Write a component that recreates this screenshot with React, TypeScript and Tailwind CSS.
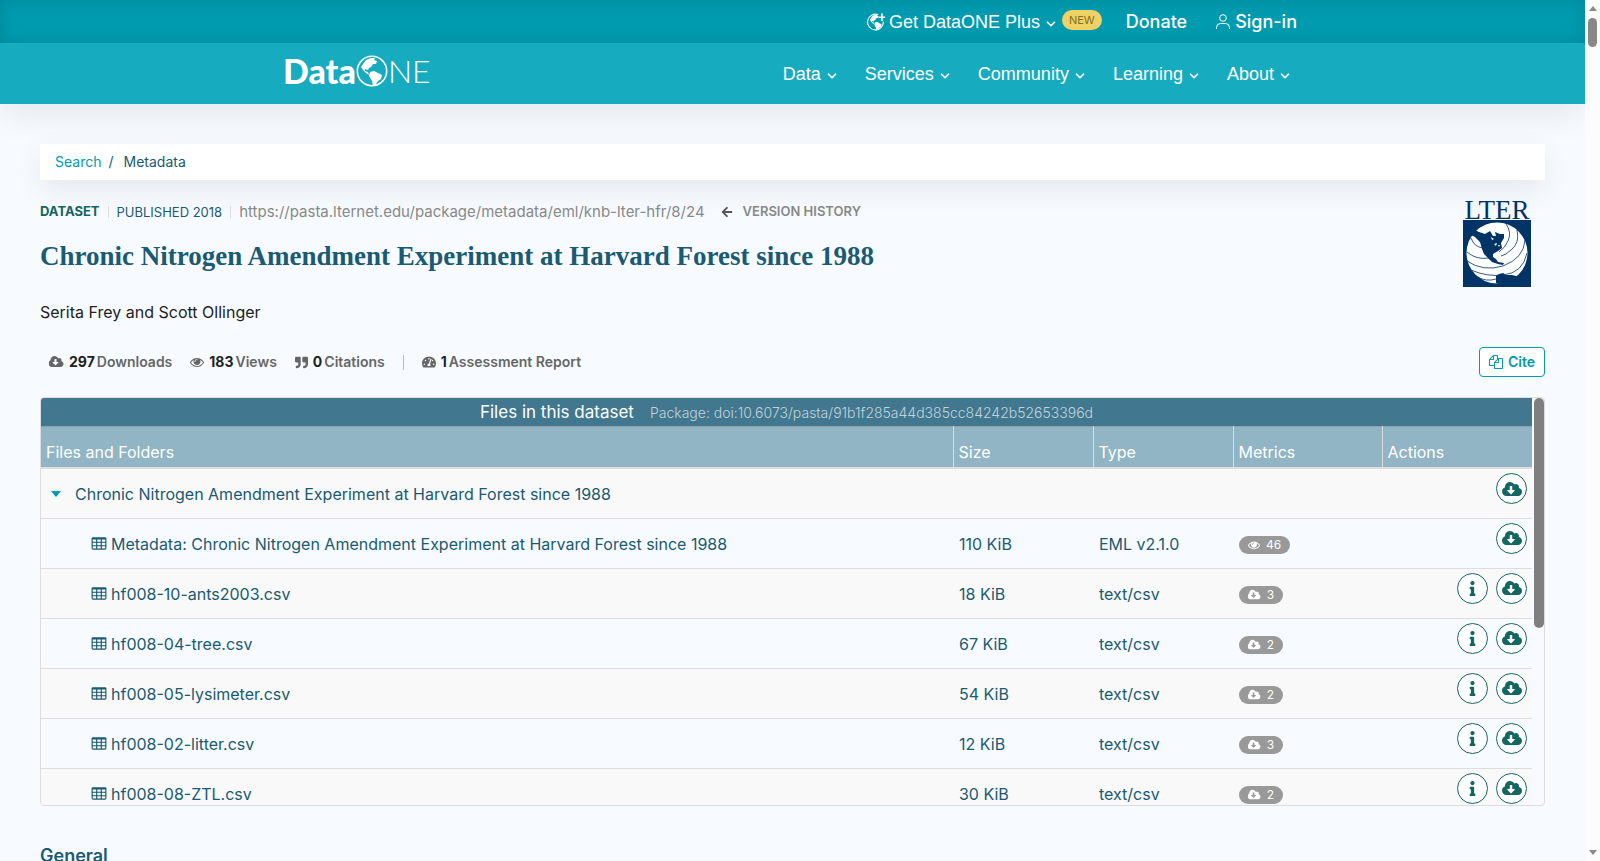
import type { ReactNode } from "react";
import { ChevronDown } from "lucide-react";
import { FaArrowLeft, FaCloudDownloadAlt, FaInfo, FaQuoteRight, FaTachometerAlt } from "react-icons/fa";

const menus = ["Data", "Services", "Community", "Learning", "About"];

const files = [
  { name: "Metadata: Chronic Nitrogen Amendment Experiment at Harvard Forest since 1988", size: "110 KiB", type: "EML v2.1.0", count: 46, metadata: true },
  { name: "hf008-10-ants2003.csv", size: "18 KiB", type: "text/csv", count: 3 },
  { name: "hf008-04-tree.csv", size: "67 KiB", type: "text/csv", count: 2 },
  { name: "hf008-05-lysimeter.csv", size: "54 KiB", type: "text/csv", count: 2 },
  { name: "hf008-02-litter.csv", size: "12 KiB", type: "text/csv", count: 3 },
  { name: "hf008-08-ZTL.csv", size: "30 KiB", type: "text/csv", count: 2 }
];

const cellPath =
  "v-192q0-14-9-23t-23-9h-320q-14 0-23 9t-9 23v192q0 14 9 23t23 9h320q14 0 23-9t9-23z";

function TableIcon() {
  const cells = [576, 1088, 1600].flatMap((x) => [608, 992, 1376].map((y) => `M${x} ${y}${cellPath}`));
  return (
    <svg viewBox="0 0 1792 1792" className="size-4 shrink-0" fill="currentColor" fillRule="evenodd" aria-hidden="true">
      <path
        d={`${cells.join("")}M1728 288v1088q0 66-47 113t-113 47h-1344q-66 0-113-47t-47-113v-1088q0-66 47-113t113-47h1344q66 0 113 47t47 113z`}
      />
    </svg>
  );
}

function EyeIcon({ className }: { className: string }) {
  return (
    <svg viewBox="0 0 1792 1792" className={className} fill="currentColor" aria-hidden="true">
      <path d="M1664 960q-152-236-381-353 61 104 61 225 0 185-131.5 316.5t-316.5 131.5-316.5-131.5-131.5-316.5q0-121 61-225-229 117-381 353 133 205 333.5 326.5t434.5 121.5 434.5-121.5 333.5-326.5zm-720-384q0-20-14-34t-34-14q-125 0-214.5 89.5t-89.5 214.5q0 20 14 34t34 14 34-14 14-34q0-86 61-147t147-61q20 0 34-14t14-34zm848 384q0 34-20 69-140 230-376.5 368.5t-499.5 138.5-499.5-139-376.5-368q-20-35-20-69t20-69q140-229 376.5-368t499.5-139 499.5 139 376.5 368q20 35 20 69z" />
    </svg>
  );
}

function CloudIcon({ className }: { className: string }) {
  return (
    <svg viewBox="0 0 1920 1792" className={className} fill="currentColor" aria-hidden="true">
      <path d="M1216 928q0-14-9-23t-23-9h-224v-352q0-13-9.5-22.5t-22.5-9.5h-192q-13 0-22.5 9.5t-9.5 22.5v352h-224q-13 0-22.5 9.5t-9.5 22.5q0 14 9 23l352 352q9 9 23 9t23-9l351-351q10-12 10-24zm640 224q0 159-112.5 271.5t-271.5 112.5h-1088q-185 0-316.5-131.5t-131.5-316.5q0-130 70-240t188-165q-2-30-2-43 0-212 150-362t362-150q156 0 285.5 87t188.5 231q71-62 166-62 106 0 181 75t75 181q0 76-41 138 130 31 213.5 135.5t83.5 238.5z" />
    </svg>
  );
}

function FilesIcon() {
  return (
    <svg viewBox="0 0 1792 1792" className="size-[14px]" fill="currentColor" aria-hidden="true">
      <path d="M1696 384q40 0 68 28t28 68v1216q0 40-28 68t-68 28h-960q-40 0-68-28t-28-68v-288h-544q-40 0-68-28t-28-68v-672q0-40 20-88t48-76l408-408q28-28 76-48t88-20h416q40 0 68 28t28 68v328q68-40 128-40h416zm-544 213l-299 299h299v-299zm-640-384l-299 299h299v-299zm196 647l316-316v-416h-384v416q0 40-28 68t-68 28h-416v640h512v-256q0-40 20-88t48-76zm956 804v-1152h-384v416q0 40-28 68t-68 28h-416v640h896z" />
    </svg>
  );
}

function Continents() {
  return (
    <>
      <path d="M7 9l3-4 5-2 4 0-1 2 3 1-1 3-3 0-2 3-2 1-1 2-3-1 0 2 3 1 1 3-3-2-3-3-2-3z" />
      <path d="M14 17l4-1 4 2 4 2-1 4-3 2-2 3-3 2-1-5-3-5z" />
    </>
  );
}

function Logo() {
  return (
    <a href="#home" aria-label="DataONE home" className="flex items-center pb-[6px] text-white">
      <span className="font-[Lato] text-[34px] leading-9 font-black">Data</span>
      <svg viewBox="0 0 32 32" className="size-8" fill="currentColor" aria-hidden="true">
        <circle cx="16" cy="16" r="14.7" fill="none" stroke="currentColor" strokeWidth="1.5" />
        <Continents />
      </svg>
      <span className="font-[Lato] text-[32px] leading-9 font-light">NE</span>
    </a>
  );
}

function LterLogo() {
  return (
    <div className="mr-[14px] flex w-[68px] flex-col items-center">
      <span className="font-['Liberation_Serif',serif] text-[27px] leading-5 text-[#003366]">LTER</span>
      <svg viewBox="0 0 68 67" className="w-full" aria-hidden="true">
        <rect width="68" height="67" fill="#003366" />
        <circle cx="34" cy="33" r="30.5" fill="#fff" />
        <g fill="none" stroke="#003366" strokeWidth="0.8">
          <path d="M43 4q6 8 2 17q-3 7-9 11" />
          <path d="M54 10q3 13-6 20q-5 5-10 6" />
          <path d="M62 20q-1 18-22 26q-20 6-36-5" />
          <path d="M64 33q-4 20-24 22q-16 2-32-5" />
          <path d="M8 18q3 9 12 10M4 32q9 8 22 6M15 57q8 5 18 2" />
        </g>
        <g fill="#003366">
          <path d="M10 9l6 3 6 2 5-3 3 5 3 0-1-4 5 2 4 0 0 4-3 5 1 5-4 3-5 3 0 3 3 2 2 3 6 1-1 2-5-1-6-2-4-4-4-4-2-5-2-7-5-5-4-2-3-4z" />
          <path d="M33 56l3-2 4-1 3 2 6 0 4 1 3 2-4 4-8 2-6 1-5-2z" />
        </g>
        <path d="M31 24l3-1-1 3zM35 25l2 0-1 2zM28 17l3 2-2 1z" fill="#fff" />
      </svg>
    </div>
  );
}

function Stat({ icon, count, label }: { icon: ReactNode; count: number; label: string }) {
  return (
    <button type="button" className="flex items-center gap-[2px] text-sm font-semibold text-[#666]">
      {icon}
      <span className="ml-[3px] font-bold text-[#222]">{count}</span>
      <span>{label}</span>
    </button>
  );
}

function ActionButton({ label, children }: { label: string; children: ReactNode }) {
  return (
    <button
      type="button"
      aria-label={label}
      className="flex size-[31px] items-center justify-center rounded-full border border-[#146660] bg-white text-[#146660]"
    >
      {children}
    </button>
  );
}

function Header() {
  return (
    <header className="shrink-0 text-white shadow-[0_10px_30px_rgba(0,0,0,0.08)]">
      <div className="bg-[#009baf] shadow-[inset_0_0_16px_rgba(0,70,90,0.25)]">
        <div className="mx-auto flex h-[43px] max-w-[1019px] items-center justify-end text-lg">
          <button type="button" className="flex items-center gap-1 font-['Liberation_Sans',sans-serif]">
            <svg viewBox="0 0 32 32" className="size-[18px]" fill="currentColor" aria-hidden="true">
              <path d="M20 3A14 14 0 1 0 29 15" fill="none" stroke="currentColor" strokeWidth="2" />
              <Continents />
              <path d="M25 1h3v5h4v3h-4v5h-3V9h-4V6h4z" />
            </svg>
            Get DataONE Plus
            <ChevronDown size={14} strokeWidth={3} className="mt-1" />
          </button>
          <span className="mr-6 mb-1 ml-1 rounded-full bg-[#efd166] px-[7px] text-[11px] leading-5 text-[#857018]">NEW</span>
          <a href="#donate" className="mr-7 font-medium">Donate</a>
          <a href="#signin" className="mr-[5px] flex items-center gap-1 font-medium">
            <svg viewBox="0 0 16 16" className="size-4" fill="none" stroke="currentColor" aria-hidden="true">
              <circle cx="8" cy="4" r="3.3" />
              <path d="M1.5 15v-1.5q0-4 4-4h5q4 0 4 4V15" />
            </svg>
            Sign-in
          </a>
        </div>
      </div>
      <nav className="bg-[#17abc0]">
        <div className="mx-auto flex h-[61px] max-w-[1019px] items-center justify-between">
          <Logo />
          <div className="mr-[10px] flex gap-[26px] font-['Liberation_Sans',sans-serif] text-lg">
            {menus.map((menu) => (
              <button type="button" key={menu} className="flex items-center gap-1">
                {menu}
                <ChevronDown size={14} strokeWidth={3} className="mt-1" />
              </button>
            ))}
          </div>
        </div>
      </nav>
    </header>
  );
}

function FilesTable() {
  return (
    <div className="mt-5 flex h-[409px] gap-[2px] overflow-hidden rounded-sm border border-[#ddd]">
      <div className="flex-1">
        <table className="w-full table-fixed border-collapse text-left text-base text-[#1a5a72]">
          <colgroup>
            <col />
            <col className="w-[140px]" />
            <col className="w-[140px]" />
            <col className="w-[149px]" />
            <col className="w-[149px]" />
          </colgroup>
          <thead className="text-white">
            <tr className="h-7 border-b border-[#8ba0a8] bg-[#42788f]">
              <th colSpan={5} className="text-center text-[17px] leading-6 font-normal">
                Files in this dataset
                <span className="ml-4 text-sm font-light text-[#c0d3dc]">
                  Package: doi:10.6073/pasta/91b1f285a44d385cc84242b52653396d
                </span>
              </th>
            </tr>
            <tr className="h-[42px] border-b-2 border-[#ddd] bg-[#91b5c4] align-bottom">
              <th className="px-[5px] pb-[3px] font-normal">Files and Folders</th>
              {["Size", "Type", "Metrics", "Actions"].map((title) => (
                <th key={title} className="border-l border-[#ddd] px-1 pb-[3px] font-normal">{title}</th>
              ))}
            </tr>
          </thead>
          <tbody>
            <tr className="h-[50px] bg-[#f9f9f9]">
              <td colSpan={4} className="pt-[2px] pl-[10px]">
                <button type="button" className="flex items-center gap-[14px]">
                  <svg viewBox="0 0 10 6" className="w-[10px] text-[#009baf]" fill="currentColor" aria-hidden="true">
                    <path d="M0 0h10L5 6z" />
                  </svg>
                  Chronic Nitrogen Amendment Experiment at Harvard Forest since 1988
                </button>
              </td>
              <td className="pt-1 pr-[5px] align-top">
                <div className="flex justify-end">
                  <ActionButton label="Download all">
                    <FaCloudDownloadAlt size={20} />
                  </ActionButton>
                </div>
              </td>
            </tr>
            {files.map((file) => (
              <tr key={file.name} className="h-[50px] border-t border-[#ddd] even:bg-[#f7fbff] odd:bg-[#f9f9f9]">
                <td className="pt-[2px] pl-[50px]">
                  <div className="flex items-center gap-1">
                    <TableIcon />
                    {file.name}
                  </div>
                </td>
                <td className="px-[5px] pt-[2px]">{file.size}</td>
                <td className="px-[5px] pt-[2px]">{file.type}</td>
                <td className="px-[5px] pt-1">
                  <span className="flex h-[18px] w-fit items-center gap-[6px] rounded-full bg-[#999] px-[9px] text-xs text-white">
                    {file.metadata ? <EyeIcon className="size-3" /> : <CloudIcon className="h-3" />}
                    {file.count}
                  </span>
                </td>
                <td className="pt-1 pr-[5px] align-top">
                  <div className="flex justify-end gap-2">
                    {!file.metadata && (
                      <ActionButton label={`About ${file.name}`}>
                        <FaInfo size={15} />
                      </ActionButton>
                    )}
                    <ActionButton label={`Download ${file.name}`}>
                      <FaCloudDownloadAlt size={20} />
                    </ActionButton>
                  </div>
                </td>
              </tr>
            ))}
          </tbody>
        </table>
      </div>
      <div className="h-[230px] w-[10px] rounded-full bg-[#7f7f7f]" />
    </div>
  );
}

export default function App() {
  return (
    <div className="flex h-screen overflow-hidden bg-[#f7fbff] font-[Inter,sans-serif]">
      <div className="flex flex-1 flex-col overflow-hidden">
        <Header />

        <main className="shrink-0 px-10 pt-10 text-[#1a5a72]">
          {/* Breadcrumb */}
          <nav className="flex h-9 items-center rounded-xs bg-white px-[15px] text-sm shadow-[0_10px_30px_rgba(0,0,0,0.08)]">
            <a href="#search" className="text-[#009baf]">Search</a>
            <span className="mr-[10px] ml-[7px]">/</span>
            <a href="#metadata">Metadata</a>
          </nav>

          {/* Title block */}
          <div className="mt-5 flex justify-between">
            <div>
              <div className="flex h-6 items-center text-[13px]">
                <span className="font-bold text-[#146660]">DATASET</span>
                <span className="ml-2 border-l border-[#ddd] pl-2 leading-3">PUBLISHED 2018</span>
                <span className="ml-2 border-l border-[#ddd] pl-2 text-[15px] leading-3 text-[#888]">
                  https://pasta.lternet.edu/package/metadata/eml/knb-lter-hfr/8/24
                </span>
                <a href="#versions" className="ml-4 flex items-center gap-[10px] font-semibold text-[#888]">
                  <FaArrowLeft size={12} className="text-[#555]" />
                  VERSION HISTORY
                </a>
              </div>
              <h1 className="mt-3 font-['Liberation_Serif',serif] text-[27px] leading-10 font-bold">
                Chronic Nitrogen Amendment Experiment at Harvard Forest since 1988
              </h1>
              <p className="mt-6 text-base leading-6 text-[#222]">Serita Frey and Scott Ollinger</p>
            </div>
            <LterLogo />
          </div>

          {/* Metrics */}
          <div className="mt-[23px] flex h-[30px] items-center justify-between">
            <div className="flex items-center gap-[18px] pl-[9px]">
              <Stat icon={<CloudIcon className="h-[14px]" />} count={297} label="Downloads" />
              <Stat icon={<EyeIcon className="size-[14px]" />} count={183} label="Views" />
              <Stat icon={<FaQuoteRight size={13} />} count={0} label="Citations" />
              <span className="h-[15px] border-l border-[#bbb]" />
              <Stat icon={<FaTachometerAlt size={14} />} count={1} label="Assessment Report" />
            </div>
            <button
              type="button"
              className="flex h-[30px] items-center gap-[5px] rounded-sm border border-[#009baf] bg-white px-[9px] text-sm font-semibold text-[#009baf]"
            >
              <FilesIcon />
              Cite
            </button>
          </div>

          <FilesTable />

          <h2 className="mt-9 text-lg leading-7 font-semibold">General</h2>
        </main>
      </div>

      {/* Page scrollbar */}
      <div className="flex w-[15px] flex-col items-center justify-between bg-[#fcfcfc] py-[6px]">
        <div className="flex flex-col items-center gap-[7px]">
          <svg viewBox="0 0 8 5" className="w-2" fill="#888" aria-hidden="true">
            <path d="M0 5h8L4 0z" />
          </svg>
          <div className="h-[29px] w-[9px] rounded-full bg-[#888]" />
        </div>
        <svg viewBox="0 0 8 5" className="w-2" fill="#888" aria-hidden="true">
          <path d="M0 0h8L4 5z" />
        </svg>
      </div>
    </div>
  );
}
